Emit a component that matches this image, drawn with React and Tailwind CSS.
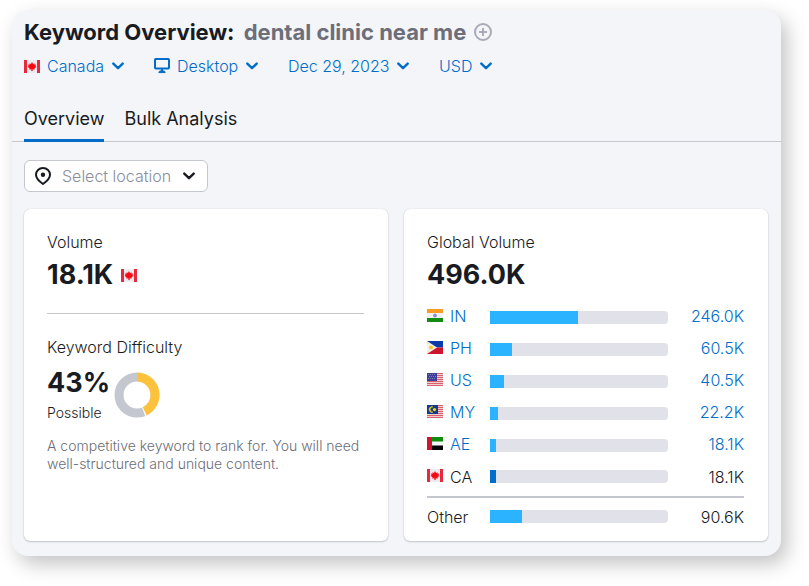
import React, { useState } from "react";

const countries = [
  { code: "IN", volume: "246.0K", share: 49.4 },
  { code: "PH", volume: "60.5K", share: 12.4 },
  { code: "US", volume: "40.5K", share: 7.9 },
  { code: "MY", volume: "22.2K", share: 4.5 },
  { code: "AE", volume: "18.1K", share: 3.4 },
  { code: "CA", volume: "18.1K", share: 3.4, current: true },
];

const flagArt = {
  CA: (
    <>
      <rect width="16" height="13" fill="#ececf0" />
      <rect width="3" height="13" fill="#e5293e" />
      <rect x="13" width="3" height="13" fill="#e5293e" />
      <path
        d="M8 2.2L9.2 4l1.3-.6v1.400L12 4.600l-.4 1.500.7.9-1.800 1.200.2 1.300-2-.3V11H7.300V9.200l-2 .3.2-1.300L3.700 7l.7-.9L4 4.600l1.500.2V3.400L6.800 4z"
        fill="#fb0510"
        stroke="#f9707a"
        strokeWidth="0.3"
      />
    </>
  ),
  IN: (
    <>
      <rect width="16" height="13" fill="#f1f1f4" />
      <rect width="16" height="4" fill="#fb9a24" />
      <rect y="9" width="16" height="4" fill="#138a12" />
      <circle cx="8" cy="6.5" r="1.5" fill="#8f9bd0" stroke="#5c6cba" strokeWidth="0.6" />
    </>
  ),
  PH: (
    <>
      <rect width="16" height="6.5" fill="#0a3aa8" />
      <rect y="6.5" width="16" height="6.5" fill="#ce1530" />
      <path d="M0 0l10 6.5L0 13z" fill="#f4f1ea" />
      <circle cx="4" cy="6.5" r="2" fill="#fcc72b" />
      <path d="M.5 1.5h1v1h-1zM.5 10.5h1v1h-1z" fill="#fcc72b" />
    </>
  ),
  US: (
    <>
      <rect width="16" height="13" fill="#f2cfd3" />
      <path
        d="M0 .5h16M0 2.5h16M0 4.5h16M0 6.5h16M0 8.5h16M0 10.5h16M0 12.5h16"
        stroke="#d8606a"
        strokeWidth="1"
      />
      <rect width="10" height="8" fill="#3f3f98" />
      <path
        d="M1 1.5h8M2 3.5h8M1 5.5h8"
        stroke="#8d8dc8"
        strokeWidth="0.8"
        strokeDasharray="1 1"
      />
    </>
  ),
  MY: (
    <>
      <rect width="16" height="13" fill="#f2cfd3" />
      <path
        d="M0 .5h16M0 2.5h16M0 4.5h16M0 6.5h16M0 8.5h16M0 10.5h16M0 12.5h16"
        stroke="#d8606a"
        strokeWidth="1"
      />
      <rect width="11" height="9" fill="#123a8e" />
      <path
        d="M6 1.8a2.900 2.900 0 1 0 0 5.400 2.300 2.300 0 1 1 0-5.400z"
        fill="#fcd116"
        stroke="#fcd116"
        strokeWidth="0.5"
      />
      <circle cx="7.5" cy="4.6" r="1.6" fill="#fcd116" />
    </>
  ),
  AE: (
    <>
      <rect width="16" height="13" fill="#f5f5f5" />
      <rect width="16" height="4.5" fill="#0b8f0b" />
      <rect y="8.5" width="16" height="4.5" fill="#050505" />
      <rect width="5" height="13" fill="#cf1530" />
    </>
  ),
};

const Flag = ({ code }) => (
  <svg viewBox="0 0 16 13" className="w-4 h-[13px] shrink-0" aria-hidden="true">
    {flagArt[code]}
  </svg>
);

const Chevron = () => (
  <svg viewBox="0 0 12 8" className="w-3 h-2 shrink-0" fill="none" aria-hidden="true">
    <path
      d="M1.3 1.6L6 6.2l4.700-4.600"
      stroke="currentColor"
      strokeWidth="2.4"
      strokeLinecap="round"
      strokeLinejoin="round"
    />
  </svg>
);

const DesktopIcon = () => (
  <svg viewBox="0 0 16 16" className="w-4 h-4 shrink-0" fill="none" aria-hidden="true">
    <rect x="1" y="1" width="14" height="9.5" rx="0.8" stroke="currentColor" strokeWidth="2" />
    <path d="M7 11h2v2h-2z" fill="currentColor" />
    <path
      d="M4.800 14.600c0-1.100.9-1.700 2-1.700h2.400c1.100 0 2 .6 2 1.700z"
      fill="currentColor"
      stroke="currentColor"
    />
  </svg>
);

const PinIcon = () => (
  <svg viewBox="0 0 16 18" className="w-4 h-[18px] shrink-0" fill="none" aria-hidden="true">
    <path
      d="M8 1C4 1 1 3.900 1 7.800c0 4 3.400 6.700 7 9.200 3.600-2.500 7-5.200 7-9.200C15 3.900 12 1 8 1z"
      stroke="currentColor"
      strokeWidth="2"
      strokeLinejoin="round"
    />
    <circle cx="8" cy="7.8" r="2.2" fill="currentColor" />
  </svg>
);

const PlusCircle = () => (
  <svg viewBox="0 0 18 18" className="w-[18px] h-[18px]" fill="none" aria-hidden="true">
    <circle cx="9" cy="9" r="8" stroke="currentColor" strokeWidth="2" />
    <path d="M9 5v8M5 9h8" stroke="currentColor" strokeWidth="2" />
  </svg>
);

const Filter = ({ label, value, icon }) => (
  <label className="flex items-center gap-[7px] cursor-pointer">
    {icon}
    <select
      aria-label={label}
      defaultValue={value}
      className="appearance-none bg-transparent leading-6 outline-none cursor-pointer"
    >
      <option value={value}>{value}</option>
    </select>
    <Chevron />
  </label>
);

const Bar = ({ share, current }) => (
  <div className="h-[13px] rounded-r-sm bg-[#e0e1e9] overflow-hidden">
    <div
      className={`h-full ${current ? "bg-[#006dca]" : "bg-[#2bb3ff]"}`}
      style={{ width: `${share}%` }}
    ></div>
  </div>
);

// The grey ring is drawn first, the score arc starts at twelve o'clock
const DifficultyRing = ({ score }) => (
  <svg viewBox="0 0 46 46" className="w-[46px] h-[46px] shrink-0" fill="none" aria-hidden="true">
    <g transform="rotate(-90 23 23)" strokeWidth="9">
      <circle cx="23" cy="23" r="18" stroke="#c4c7cf" />
      <circle
        cx="23"
        cy="23"
        r="18"
        stroke="#ffffff"
        pathLength="100"
        strokeDasharray={`${score + 1} 100`}
      />
      <circle
        cx="23"
        cy="23"
        r="18"
        stroke="#fdc23c"
        pathLength="100"
        strokeDasharray={`${score} 100`}
      />
    </g>
  </svg>
);

const App = () => {
  const [tab, setTab] = useState("Overview");

  return (
    <div className="min-h-screen bg-white pt-[10px] pl-3 pr-7 pb-[30px] font-['Inter','Liberation_Sans',sans-serif] text-[#191b23]">
      <main className="rounded-2xl bg-[#f4f5f9] pb-[15px] shadow-[6px_8px_20px_rgba(0,0,0,0.24)]">
        <header className="border-b border-[#c4c7cf] px-3 pt-1">
          <div className="flex items-center gap-2">
            <h1 className="text-[22px] leading-9 font-bold whitespace-nowrap">
              Keyword Overview:{" "}
              <span className="ml-1 text-[#6c6e79]">dental clinic near me</span>
            </h1>
            <button type="button" aria-label="Add keyword" className="text-[#a9abb6]">
              <PlusCircle />
            </button>
          </div>

          <div className="mt-1 flex items-center gap-[30px] font-light text-[#006dca]">
            <Filter label="Country" value="Canada" icon={<Flag code="CA" />} />
            <Filter label="Device" value="Desktop" icon={<DesktopIcon />} />
            <Filter label="Date" value="Dec 29, 2023" />
            <Filter label="Currency" value="USD" />
          </div>

          <nav className="mt-6 flex gap-5">
            {["Overview", "Bulk Analysis"].map((name) => (
              <button
                key={name}
                type="button"
                onClick={() => setTab(name)}
                className={`-mb-px border-b-3 pt-[3px] pb-[6px] text-lg leading-7 ${
                  tab === name ? "border-[#006dca]" : "border-transparent"
                }`}
              >
                {name}
              </button>
            ))}
          </nav>
        </header>

        <div className="px-3 pt-[18px]">
          <label className="inline-flex h-8 items-center gap-[11px] rounded-md border border-[#c4c7cf] bg-white pl-[10px] pr-3">
            <PinIcon />
            <select
              aria-label="Location"
              className="appearance-none bg-transparent font-light leading-6 text-[#8a8e9b] outline-none"
            >
              <option>Select location</option>
            </select>
            <Chevron />
          </label>
        </div>

        <div className="mt-[17px] grid grid-cols-2 gap-4 pl-3 pr-[13px]">
          <section className="rounded-md bg-white pl-[23px] pr-6 pt-[21px] shadow-[0_0_1px_rgba(25,27,35,0.2),0_1px_2px_rgba(25,27,35,0.2)]">
            <h2 className="leading-6 font-light">Volume</h2>
            <div className="mt-[3px] flex items-center gap-2">
              <span className="text-[27px] leading-9 font-bold">18.1K</span>
              <Flag code="CA" />
            </div>

            <hr className="mt-5 border-[#c4c7cf]" />

            <h2 className="mt-[21px] leading-6 font-light">Keyword Difficulty</h2>
            <div className="mt-[6px] flex items-center gap-1">
              <div>
                <p className="text-[27px] leading-9 font-bold">43%</p>
                <p className="text-sm leading-6 font-light">Possible</p>
              </div>
              <DifficultyRing score={43} />
            </div>
            <p className="mt-3 text-sm leading-[18px] font-light text-[#6c6e79]">
              A competitive keyword to rank for. You will need well-structured
              and unique content.
            </p>
          </section>

          <section className="rounded-md bg-white pl-[23px] pr-6 pt-[21px] pb-[6px] shadow-[0_0_1px_rgba(25,27,35,0.2),0_1px_2px_rgba(25,27,35,0.2)]">
            <h2 className="leading-6 font-light">Global Volume</h2>
            <p className="mt-[3px] text-[27px] leading-9 font-bold">496.0K</p>

            <table className="mt-2 w-full table-fixed font-light">
              <colgroup>
                <col className="w-[63px]" />
                <col />
                <col className="w-[76px]" />
              </colgroup>
              <tbody>
                {countries.map((row) => (
                  <tr key={row.code} className="h-8 last:h-9 last:*:pb-1">
                    <th scope="row" className="pb-0.5 font-light">
                      <span className="flex items-center gap-[7px]">
                        <span className="pb-0.5">
                          <Flag code={row.code} />
                        </span>
                        {row.current ? (
                          row.code
                        ) : (
                          <a href="#" className="text-[#006dca]">
                            {row.code}
                          </a>
                        )}
                      </span>
                    </th>
                    <td>
                      <Bar share={row.share} current={row.current} />
                    </td>
                    <td className="pb-0.5 text-right">
                      {row.current ? (
                        row.volume
                      ) : (
                        <a href="#" className="text-[#006dca]">
                          {row.volume}
                        </a>
                      )}
                    </td>
                  </tr>
                ))}
              </tbody>
              <tfoot>
                <tr className="h-[38px] border-t-2 border-[#c4c7cf]">
                  <th scope="row" className="text-left font-light">
                    Other
                  </th>
                  <td>
                    <Bar share={18} />
                  </td>
                  <td className="text-right">90.6K</td>
                </tr>
              </tfoot>
            </table>
          </section>
        </div>
      </main>
    </div>
  );
};

export default App;
